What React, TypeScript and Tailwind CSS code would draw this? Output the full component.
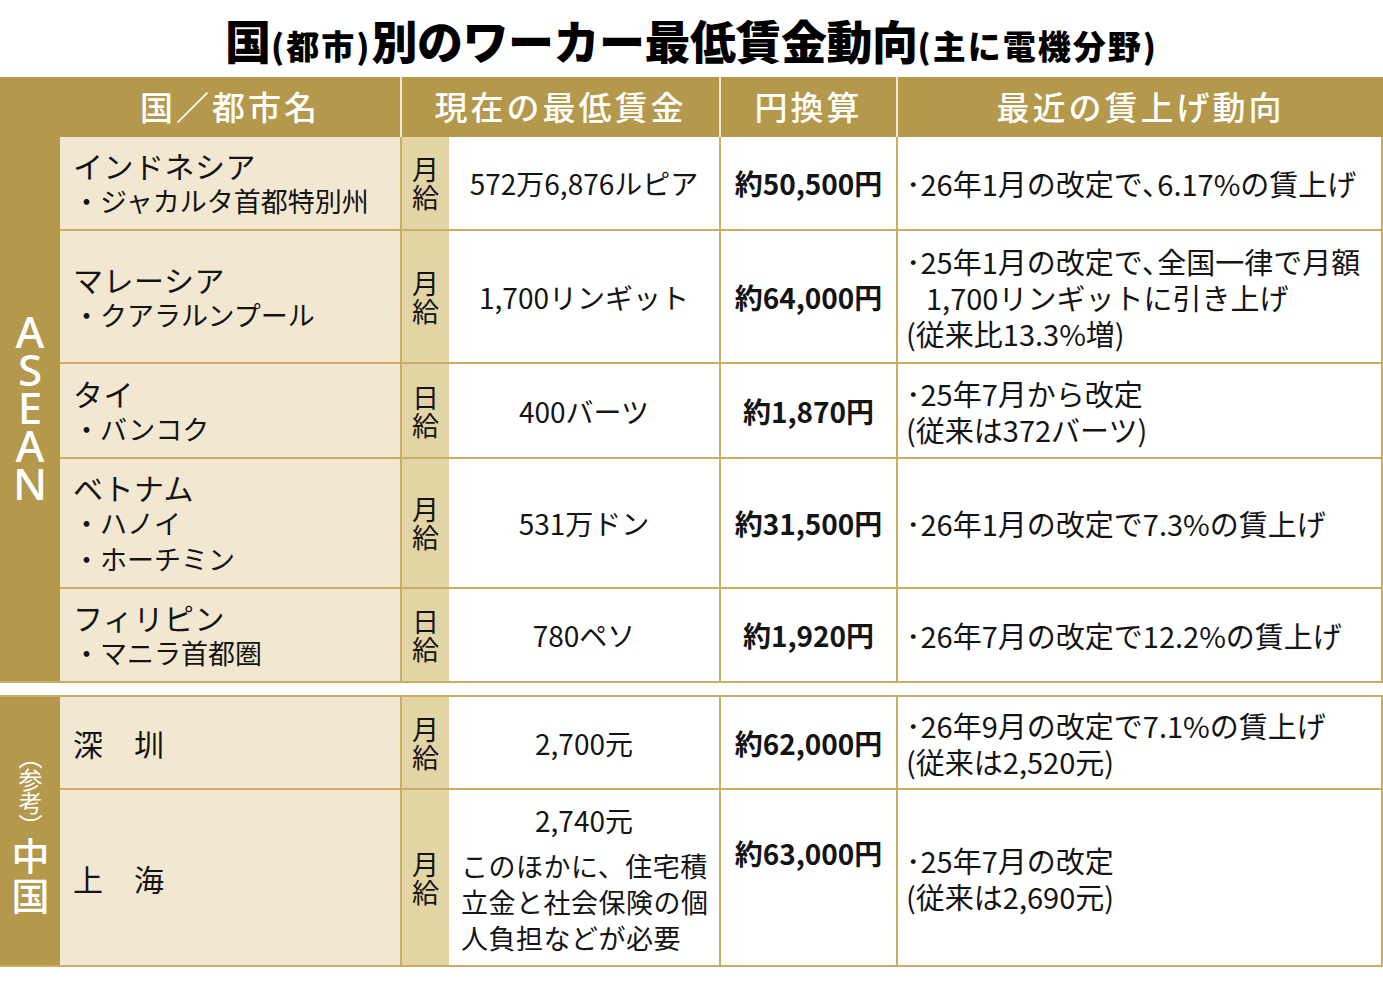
import React from 'react';

type Row = {
  name: string;
  subs?: string[];
  unit: string;
  wage: React.ReactNode;
  yen: string;
  yenTop?: boolean;
  trend: React.ReactNode;
};

const line = 'border-[#c9ae62]';

const asean: Row[] = [
  {
    name: 'インドネシア',
    subs: ['・ジャカルタ首都特別州'],
    unit: '月給',
    wage: '572万6,876ルピア',
    yen: '約50,500円',
    trend: <div>･26年1月の改定で､6.17%の賃上げ</div>,
  },
  {
    name: 'マレーシア',
    subs: ['・クアラルンプール'],
    unit: '月給',
    wage: '1,700リンギット',
    yen: '約64,000円',
    trend: (
      <>
        <div>･25年1月の改定で､全国一律で月額</div>
        <div className="pl-[20px]">1,700リンギットに引き上げ</div>
        <div>(従来比13.3%増)</div>
      </>
    ),
  },
  {
    name: 'タイ',
    subs: ['・バンコク'],
    unit: '日給',
    wage: '400バーツ',
    yen: '約1,870円',
    trend: (
      <>
        <div>･25年7月から改定</div>
        <div>(従来は372バーツ)</div>
      </>
    ),
  },
  {
    name: 'ベトナム',
    subs: ['・ハノイ', '・ホーチミン'],
    unit: '月給',
    wage: '531万ドン',
    yen: '約31,500円',
    trend: <div>･26年1月の改定で7.3%の賃上げ</div>,
  },
  {
    name: 'フィリピン',
    subs: ['・マニラ首都圏'],
    unit: '日給',
    wage: '780ペソ',
    yen: '約1,920円',
    trend: <div>･26年7月の改定で12.2%の賃上げ</div>,
  },
];

const china: Row[] = [
  {
    name: '深　圳',
    unit: '月給',
    wage: '2,700元',
    yen: '約62,000円',
    trend: (
      <>
        <div>･26年9月の改定で7.1%の賃上げ</div>
        <div>(従来は2,520元)</div>
      </>
    ),
  },
  {
    name: '上　海',
    unit: '月給',
    wage: (
      <div className="flex flex-col items-center pt-[12px] self-start w-full">
        <div className="leading-[36px]">2,740元</div>
        <div className="mt-[10px] text-[27px] leading-[36px] text-left w-full pl-[12px] tracking-[0.5px]">
          <div>このほかに、住宅積</div>
          <div>立金と社会保険の個</div>
          <div>人負担などが必要</div>
        </div>
      </div>
    ),
    yen: '約63,000円',
    yenTop: true,
    trend: (
      <>
        <div>･25年7月の改定</div>
        <div>(従来は2,690元)</div>
      </>
    ),
  },
];

function Cells({ row }: { row: Row }) {
  return (
    <>
      <div className={`bg-[#f2e8d1] border-b-2 border-r-2 ${line} flex flex-col justify-center pl-[13px]`}>
        <div className="text-[30px] leading-[36px] tracking-[0.5px]">{row.name}</div>
        {row.subs?.map((s) => (
          <div key={s} className="text-[27px] leading-[36px]">
            {s}
          </div>
        ))}
      </div>
      <div className={`bg-[#e3d4a6] border-b-2 ${line} flex items-center justify-center`}>
        <span className="whitespace-pre-line text-center text-[27px] leading-[28px]">{row.unit.split('').join('\n')}</span>
      </div>
      <div className={`bg-white border-b-2 border-r-2 ${line} flex items-center justify-center text-[28px] leading-[36px] whitespace-nowrap`}>
        {row.wage}
      </div>
      <div
        className={`bg-white border-b-2 border-r-2 ${line} flex justify-center text-[28px] leading-[36px] font-bold whitespace-nowrap ${
          row.yenTop ? 'items-start pt-[45px]' : 'items-center'
        }`}
      >
        {row.yen}
      </div>
      <div className={`bg-white border-b-2 border-r-2 ${line} flex flex-col justify-center pl-[8px] text-[29px] leading-[36px] whitespace-nowrap`}>
        {row.trend}
      </div>
    </>
  );
}

export default function App() {
  return (
    <div className="w-[1383px] h-[985px] bg-white text-[#141414] font-['Noto_Sans_CJK_JP','Noto_Sans',sans-serif] overflow-hidden">
      <h1 className="h-[77px] flex items-baseline justify-center pt-[14px] font-black text-black whitespace-nowrap">
        <span className="text-[46px] leading-[50px]">国</span>
        <span className="text-[33px] leading-[50px] tracking-[2px]">(都市)</span>
        <span className="text-[46px] leading-[50px] tracking-[-0.5px]">別のワーカー最低賃金動向</span>
        <span className="text-[33px] leading-[50px] tracking-[2px]">(主に電機分野)</span>
      </h1>

      <div className="grid grid-cols-[60px_342px_319px_177px_485px] h-[60px] bg-[#b4984b] text-white text-[33px] font-medium tracking-[3px]">
        <div />
        <div className="flex items-center justify-center border-r-2 border-[#f1e8cf]">国／都市名</div>
        <div className="flex items-center justify-center border-r-2 border-[#f1e8cf]">現在の最低賃金</div>
        <div className="flex items-center justify-center border-r-2 border-[#f1e8cf]">円換算</div>
        <div className="flex items-center justify-center">最近の賃上げ動向</div>
      </div>

      <div className="grid grid-cols-[60px_342px_47px_272px_177px_485px] grid-rows-[94px_133px_95px_130px_94px]">
        <div className={`row-span-5 bg-[#b4984b] border-b-2 ${line} flex items-center justify-center pb-[4px]`}>
          <span className="whitespace-pre-line text-center text-white font-['Noto_Sans',sans-serif] text-[44px] leading-[38px] font-medium">
            {'A\nS\nE\nA\nN'}
          </span>
        </div>
        {asean.map((r) => (
          <Cells key={r.name} row={r} />
        ))}
      </div>

      <div className="h-[12px]" />

      <div className={`grid grid-cols-[60px_342px_47px_272px_177px_485px] grid-rows-[93px_177px] border-t-2 ${line}`}>
        <div className={`row-span-2 bg-[#b4984b] border-b-2 ${line} flex flex-col items-center justify-center text-white`}>
          <span className="[writing-mode:vertical-rl] text-[24px] leading-none tracking-[-1px]">（参考）</span>
          <span className="[writing-mode:vertical-rl] text-[38px] leading-none tracking-[2px] font-medium">中国</span>
        </div>
        {china.map((r) => (
          <Cells key={r.name} row={r} />
        ))}
      </div>
    </div>
  );
}
